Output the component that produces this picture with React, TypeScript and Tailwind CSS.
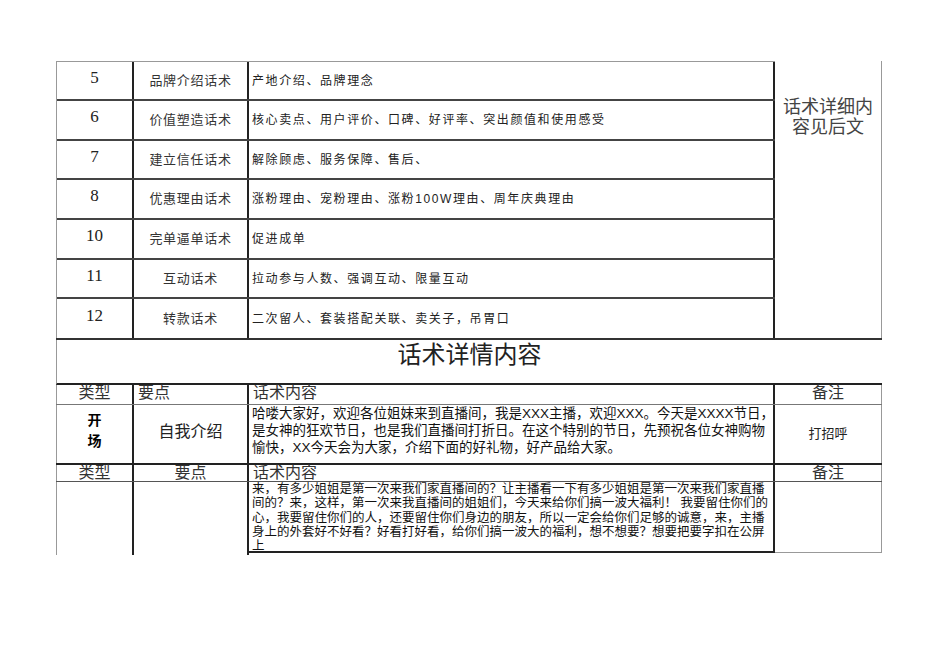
import React from "react"

const rows = [
  { no: "5", name: "品牌介绍话术", desc: "产地介绍、品牌理念", h: "h-[39px]" },
  { no: "6", name: "价值塑造话术", desc: "核心卖点、用户评价、口碑、好评率、突出颜值和使用感受", h: "h-[40px]" },
  { no: "7", name: "建立信任话术", desc: "解除顾虑、服务保障、售后、", h: "h-[39px]" },
  { no: "8", name: "优惠理由话术", desc: "涨粉理由、宠粉理由、涨粉100W理由、周年庆典理由", h: "h-[40px]" },
  { no: "10", name: "完单逼单话术", desc: "促进成单", h: "h-[40px]" },
  { no: "11", name: "互动话术", desc: "拉动参与人数、强调互动、限量互动", h: "h-[39px]" },
  { no: "12", name: "转款话术", desc: "二次留人、套装搭配关联、卖关子，吊胃口", h: "h-[39px]" },
]

const openingLines = [
  "哈喽大家好，欢迎各位姐妹来到直播间，我是XXX主播，欢迎XXX。今天是XXXX节日，",
  "是女神的狂欢节日，也是我们直播间打折日。在这个特别的节日，先预祝各位女神购物",
  "愉快，XX今天会为大家，介绍下面的好礼物，好产品给大家。",
]

const welcomeLines = [
  "来，有多少姐姐是第一次来我们家直播间的？让主播看一下有多少姐姐是第一次来我们家直播",
  "间的？来，这样，第一次来我直播间的姐姐们，今天来给你们搞一波大福利！ 我要留住你们的",
  "心，我要留住你们的人，还要留住你们身边的朋友，所以一定会给你们足够的诚意，来，主播",
  "身上的外套好不好看？好看打好看，给你们搞一波大的福利，想不想要？想要把要字扣在公屏",
  "上",
]

// header row of the detail table (类型 / 要点 / 话术内容 / 备注)
function HeaderRow({ h, centerPoint }: { h: string; centerPoint?: boolean }) {
  return (
    <div className={`flex ${h} text-[16px] leading-[17px] text-[#333]`}>
      <div className="w-[78px] border-l border-l-[#999] border-r-2 border-r-[#222] flex justify-center">
        <span className="-mt-[1px]">类型</span>
      </div>
      <div className={`w-[115px] border-r-2 border-r-[#222] flex ${centerPoint ? "justify-center" : "pl-[4px]"}`}>
        <span className="-mt-[1px]">要点</span>
      </div>
      <div className="w-[526px] border-r-2 border-r-[#222] pl-[4px]">
        <span className="block -mt-[1px]">话术内容</span>
      </div>
      <div className="w-[107px] border-r border-r-[#999] flex justify-center">
        <span className="-mt-[1px]">备注</span>
      </div>
    </div>
  )
}

export default function App() {
  return (
    <div className="min-h-[672px] w-[950px] bg-white pt-[61px] pl-[56px] font-['Liberation_Sans','Noto_Sans_CJK_SC',sans-serif] text-black">
      <div className="w-[826px]">
        {/* overview table */}
        <div className="flex border-b-2 border-b-[#333]">
          <div className="w-[719px] border-t border-t-[#999] border-l border-l-[#999]">
            {rows.map((r, i) => (
              <div
                key={r.no}
                className={`flex ${r.h} ${i < rows.length - 1 ? "border-b-2 border-b-[#444]" : ""}`}
              >
                <div className="w-[77px] border-r-2 border-r-[#222] flex justify-center items-center pb-[6px] font-['Liberation_Serif',serif] text-[17px] text-[#222]">
                  {r.no}
                </div>
                <div className="w-[115px] border-r-2 border-r-[#222] flex justify-center items-center text-[13px] tracking-[0.7px] text-[#333]">
                  {r.name}
                </div>
                <div className="flex-1 border-r-2 border-r-[#222] flex items-center pl-[3px] text-[12px] tracking-[1.6px] text-[#222]">
                  {r.desc}
                </div>
              </div>
            ))}
          </div>
          <div className="w-[107px] border-r border-r-[#999] pt-[36px] text-center text-[18px] leading-[20px] text-[#444]">
            话术详细内
            <br />
            容见后文
          </div>
        </div>

        {/* title */}
        <div className="h-[45px] border-l border-l-[#999] border-b-2 border-b-[#222] text-center text-[24px] leading-[30px] text-[#222]">
          话术详情内容
        </div>

        <HeaderRow h="h-[20px] border-b border-b-[#777]" />

        {/* opening row */}
        <div className="flex h-[60px] border-b-2 border-b-[#222]">
          <div className="w-[78px] border-l border-l-[#999] border-r-2 border-r-[#222] flex flex-col items-center justify-center pb-[6px] text-[14px] leading-[21px] font-bold">
            <span>开</span>
            <span>场</span>
          </div>
          <div className="w-[115px] border-r-2 border-r-[#222] flex justify-center items-center pb-[4px] text-[16px] text-[#222]">
            自我介绍
          </div>
          <div className="w-[526px] border-r-2 border-r-[#222] pl-[3px] text-[13.5px] leading-[17px] text-[#111]">
            {openingLines.map((l) => (
              <span key={l} className="block whitespace-nowrap">
                {l}
              </span>
            ))}
          </div>
          <div className="w-[107px] border-r border-r-[#999] flex justify-center items-center text-[13px] text-[#222]">
            打招呼
          </div>
        </div>

        <HeaderRow h="h-[17px] border-b border-b-[#555]" centerPoint />

        {/* detail row */}
        <div className="flex items-start">
          <div className="w-[78px] h-[73px] border-l border-l-[#999] border-r-2 border-r-[#222]" />
          <div className="w-[115px] h-[73px] border-r-2 border-r-[#222]" />
          <div className="w-[526px] h-[71px] border-r-2 border-r-[#222] border-b-2 border-b-[#222] pl-[3px] text-[12.5px] leading-[14.25px] text-[#111]">
            {welcomeLines.map((l) => (
              <span key={l} className="block whitespace-nowrap">
                {l}
              </span>
            ))}
          </div>
          <div className="w-[107px] h-[71px] border-r border-r-[#999] border-b border-b-[#999]" />
        </div>
      </div>
    </div>
  )
}
